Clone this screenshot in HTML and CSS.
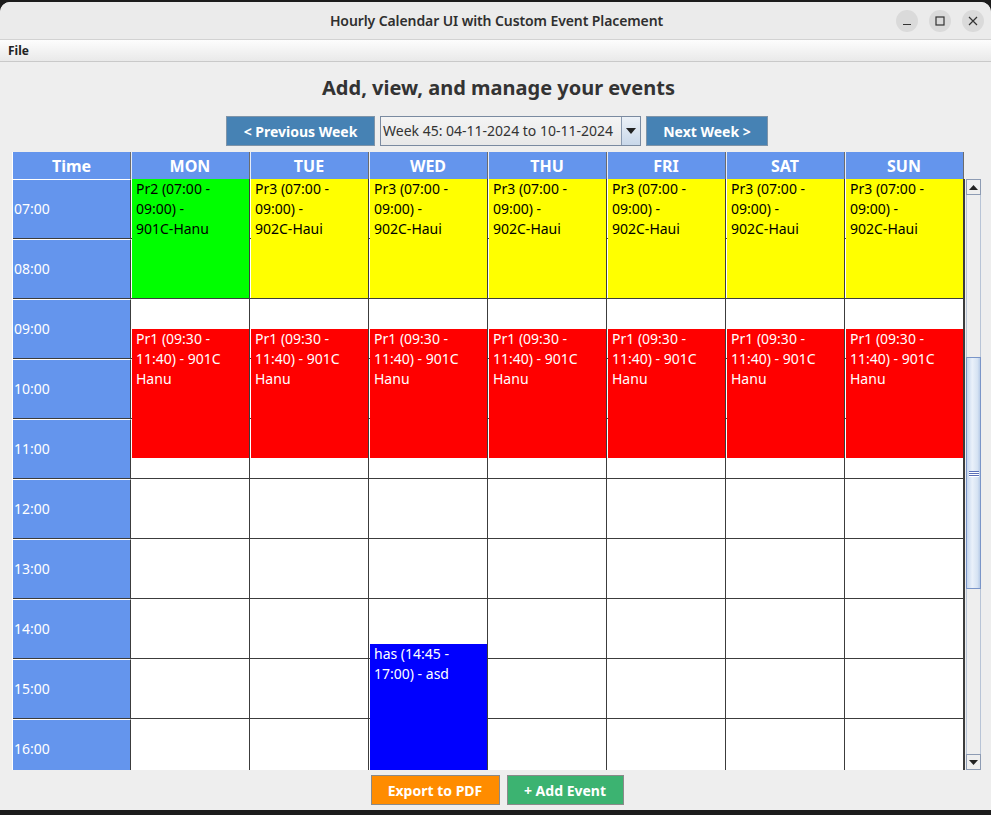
FILE: index.html
```html
<!DOCTYPE html>
<html lang="en">
<head>
<meta charset="utf-8">
<title>Hourly Calendar UI with Custom Event Placement</title>
<link rel="stylesheet" href="styles.css">
</head>
<body>
<div class="window">
  <header class="titlebar">
    <div></div>
    <div class="title">Hourly Calendar UI with Custom Event Placement</div>
    <div class="wbtns">
      <span class="wbtn"><svg width="10" height="10" viewBox="0 0 10 10"><path d="M1 8.5h8" stroke="#333" stroke-width="1.2"/></svg></span>
      <span class="wbtn"><svg width="10" height="10" viewBox="0 0 10 10"><rect x="1" y="1" width="8" height="8" fill="none" stroke="#333" stroke-width="1.2"/></svg></span>
      <span class="wbtn"><svg width="10" height="10" viewBox="0 0 10 10"><path d="M1 1l8 8M9 1l-8 8" stroke="#333" stroke-width="1.2"/></svg></span>
    </div>
  </header>
  <nav class="menubar"><span class="menu">File</span></nav>

  <main class="content">
    <h1 class="heading">Add, view, and manage your events</h1>
    <div class="navrow">
      <button class="navbtn prev">&lt; Previous Week</button>
      <div class="combo">
        <span class="combo-text">Week 45: 04-11-2024 to 10-11-2024</span>
        <span class="combo-arrow"><svg width="10" height="6" viewBox="0 0 10 6"><path d="M0 0h10L5 6z" fill="#222"/></svg></span>
      </div>
      <button class="navbtn next">Next Week &gt;</button>
    </div>

    <section class="calendar">
      <div class="head-row">
        <div class="hcell">Time</div>
        <div class="hcell">MON</div>
        <div class="hcell">TUE</div>
        <div class="hcell">WED</div>
        <div class="hcell">THU</div>
        <div class="hcell">FRI</div>
        <div class="hcell">SAT</div>
        <div class="hcell">SUN</div>
        <div class="hcorner"></div>
      </div>
      <div class="body-row">
        <div class="viewport">
          <div class="grid">
            <div class="tcell">07:00</div><div class="dcell"></div><div class="dcell"></div><div class="dcell"></div><div class="dcell"></div><div class="dcell"></div><div class="dcell"></div><div class="dcell"></div>
            <div class="tcell">08:00</div><div class="dcell"></div><div class="dcell"></div><div class="dcell"></div><div class="dcell"></div><div class="dcell"></div><div class="dcell"></div><div class="dcell"></div>
            <div class="tcell">09:00</div><div class="dcell"></div><div class="dcell"></div><div class="dcell"></div><div class="dcell"></div><div class="dcell"></div><div class="dcell"></div><div class="dcell"></div>
            <div class="tcell">10:00</div><div class="dcell"></div><div class="dcell"></div><div class="dcell"></div><div class="dcell"></div><div class="dcell"></div><div class="dcell"></div><div class="dcell"></div>
            <div class="tcell">11:00</div><div class="dcell"></div><div class="dcell"></div><div class="dcell"></div><div class="dcell"></div><div class="dcell"></div><div class="dcell"></div><div class="dcell"></div>
            <div class="tcell">12:00</div><div class="dcell"></div><div class="dcell"></div><div class="dcell"></div><div class="dcell"></div><div class="dcell"></div><div class="dcell"></div><div class="dcell"></div>
            <div class="tcell">13:00</div><div class="dcell"></div><div class="dcell"></div><div class="dcell"></div><div class="dcell"></div><div class="dcell"></div><div class="dcell"></div><div class="dcell"></div>
            <div class="tcell">14:00</div><div class="dcell"></div><div class="dcell"></div><div class="dcell"></div><div class="dcell"></div><div class="dcell"></div><div class="dcell"></div><div class="dcell"></div>
            <div class="tcell">15:00</div><div class="dcell"></div><div class="dcell"></div><div class="dcell"></div><div class="dcell"></div><div class="dcell"></div><div class="dcell"></div><div class="dcell"></div>
            <div class="tcell">16:00</div><div class="dcell"></div><div class="dcell"></div><div class="dcell"></div><div class="dcell"></div><div class="dcell"></div><div class="dcell"></div><div class="dcell"></div>
          </div>

          <div class="event green" style="left:119px;top:0px;height:119px">Pr2 (07:00 - 09:00) - <span class="nw">901C-Hanu</span></div>
          <div class="event yellow" style="left:238px;top:0px;height:119px">Pr3 (07:00 - 09:00) - <span class="nw">902C-Haui</span></div>
          <div class="event yellow" style="left:357px;top:0px;height:119px">Pr3 (07:00 - 09:00) - <span class="nw">902C-Haui</span></div>
          <div class="event yellow" style="left:476px;top:0px;height:119px">Pr3 (07:00 - 09:00) - <span class="nw">902C-Haui</span></div>
          <div class="event yellow" style="left:595px;top:0px;height:119px">Pr3 (07:00 - 09:00) - <span class="nw">902C-Haui</span></div>
          <div class="event yellow" style="left:714px;top:0px;height:119px">Pr3 (07:00 - 09:00) - <span class="nw">902C-Haui</span></div>
          <div class="event yellow" style="left:833px;top:0px;height:119px">Pr3 (07:00 - 09:00) - <span class="nw">902C-Haui</span></div>

          <div class="event red" style="left:119px;top:150px;height:129px">Pr1 (09:30 - 11:40) - 901C Hanu</div>
          <div class="event red" style="left:238px;top:150px;height:129px">Pr1 (09:30 - 11:40) - 901C Hanu</div>
          <div class="event red" style="left:357px;top:150px;height:129px">Pr1 (09:30 - 11:40) - 901C Hanu</div>
          <div class="event red" style="left:476px;top:150px;height:129px">Pr1 (09:30 - 11:40) - 901C Hanu</div>
          <div class="event red" style="left:595px;top:150px;height:129px">Pr1 (09:30 - 11:40) - 901C Hanu</div>
          <div class="event red" style="left:714px;top:150px;height:129px">Pr1 (09:30 - 11:40) - 901C Hanu</div>
          <div class="event red" style="left:833px;top:150px;height:129px">Pr1 (09:30 - 11:40) - 901C Hanu</div>

          <div class="event blue" style="left:357px;top:465px;height:135px">has (14:45 - 17:00) - asd</div>
        </div>
        <div class="scrollbar">
          <div class="sb-btn"><svg width="9" height="5" viewBox="0 0 9 5"><path d="M0 5h9L4.5 0z" fill="#222"/></svg></div>
          <div class="sb-track">
            <div class="sb-space"></div>
            <div class="sb-thumb"><span class="grip"></span><span class="grip"></span><span class="grip"></span></div>
          </div>
          <div class="sb-btn"><svg width="9" height="5" viewBox="0 0 9 5"><path d="M0 0h9L4.5 5z" fill="#222"/></svg></div>
        </div>
      </div>
    </section>

    <div class="actions">
      <button class="actbtn export">Export to PDF</button>
      <button class="actbtn add">+ Add Event</button>
    </div>
  </main>
</div>
</body>
</html>
```

FILE: styles.css
```css
* { box-sizing: border-box; }

html, body {
  margin: 0;
  padding: 0;
}

body {
  width: 991px;
  height: 815px;
  overflow: hidden;
  background: #1c1c1c;
  font-family: "Noto Sans", "DejaVu Sans", sans-serif;
}

.window {
  display: flex;
  flex-direction: column;
  background: #eeeeee;
  border-radius: 10px 10px 0 0;
  margin-top: 2px;
  height: 808px;
  overflow: hidden;
}

.titlebar {
  height: 38px;
  flex: none;
  display: grid;
  grid-template-columns: 1fr auto 1fr;
  align-items: center;
  background: #ebebeb;
  border-bottom: 1px solid #d2d2d2;
}

.title {
  font-size: 14px;
  font-weight: 600;
  color: #2f2f2f;
  letter-spacing: -0.1px;
  padding-left: 2px;
}

.wbtns {
  display: flex;
  justify-content: flex-end;
  gap: 11px;
  padding-right: 7px;
}

.wbtn {
  width: 22px;
  height: 22px;
  border-radius: 50%;
  background: #dadada;
  display: flex;
  align-items: center;
  justify-content: center;
}

.menubar {
  height: 22px;
  flex: none;
  background: linear-gradient(#fdfdfd, #e9e9e9);
  border-bottom: 1px solid #c9c9c9;
  display: flex;
  align-items: center;
  padding-left: 8px;
}

.menu {
  font-size: 12px;
  font-weight: 700;
  color: #222;
}

.content {
  flex: 1;
  display: flex;
  flex-direction: column;
  padding: 0 9px 0 12px;
}

.heading {
  margin: 13px 0 0;
  text-align: center;
  font-size: 20px;
  line-height: 26px;
  font-weight: 700;
  color: #333333;
  padding-left: 3px;
}

.navrow {
  margin-top: 15px;
  display: flex;
  justify-content: center;
  gap: 5px;
  height: 30px;
}

.navbtn {
  height: 30px;
  border: 1px solid #7f94a8;
  background: #4682b4;
  color: #ffffff;
  font-family: "Noto Sans", sans-serif;
  font-size: 14px;
  font-weight: 700;
  padding: 0;
}

.navbtn.prev { width: 149px; }
.navbtn.next { width: 122px; }

.combo {
  width: 261px;
  height: 30px;
  display: flex;
  border: 1px solid #7a8aa0;
  background: #eeeeee;
  box-shadow: inset 1px 1px 0 #ffffff;
}

.combo-text {
  flex: 1;
  font-size: 14px;
  color: #333333;
  line-height: 28px;
  padding-left: 2px;
  border-right: 1px solid #8a9ab0;
  background: linear-gradient(#f4f4f4, #e8e8e8);
}

.combo-arrow {
  width: 18px;
  display: flex;
  align-items: center;
  justify-content: center;
  background: linear-gradient(#ecf1f7, #c9d8ea);
}

.calendar {
  margin-top: 6px;
  display: flex;
  flex-direction: column;
  border-left: 1px solid #ffffff;
}

.head-row {
  display: grid;
  grid-template-columns: 118px repeat(7, 119px) 18px;
  height: 27px;
}

.hcell {
  background: #6495ed;
  color: #ffffff;
  font-size: 16px;
  font-weight: 700;
  display: flex;
  align-items: center;
  justify-content: center;
  border-right: 1px solid #6c6c6c;
  box-shadow: inset 1px 0 0 #e6ecf8;
  padding-top: 1px;
}

.hcell:first-child { box-shadow: none; }

.hcorner { background: #eeeeee; }

.body-row {
  display: flex;
  height: 591px;
}

.viewport {
  width: 951px;
  height: 591px;
  overflow: hidden;
  position: relative;
  background: #ffffff;
}

.grid {
  display: grid;
  grid-template-columns: 118px repeat(7, 119px);
  grid-auto-rows: 60px;
}

.tcell {
  background: #6495ed;
  color: #ffffff;
  font-size: 14px;
  display: flex;
  align-items: center;
  padding-left: 1px;
  padding-bottom: 1px;
  border-top: 1px solid #ffffff;
  border-bottom: 1px solid #3c3c3c;
  border-right: 1px solid #3c3c3c;
}

.dcell {
  background: #ffffff;
  border-bottom: 1px solid #3c3c3c;
  border-right: 1px solid #3c3c3c;
}

.event {
  position: absolute;
  width: 117px;
  padding: 0 4px;
  font-size: 14px;
  line-height: 20px;
  overflow: hidden;
}

.nw { white-space: nowrap; }

.event.green { background: #00ff00; color: #000000; }
.event.yellow { background: #ffff00; color: #000000; }
.event.red { background: #ff0000; color: #ffffff; }
.event.blue { background: #0000ff; color: #ffffff; }

.scrollbar {
  width: 18px;
  display: flex;
  flex-direction: column;
  background: #eeeeee;
  border-left: 1px solid #3c3c3c;
}

.sb-btn {
  height: 16px;
  flex: none;
  margin: 0 1px 0 1px;
  background: #eeeeee;
  border: 1px solid #8d9bb3;
  display: flex;
  align-items: center;
  justify-content: center;
}

.sb-track {
  flex: 1;
  display: flex;
  flex-direction: column;
  margin: 0 1px;
  border-left: 1px solid #b8c4d6;
  border-right: 1px solid #b8c4d6;
}

.sb-space {
  height: 162px;
  flex: none;
}

.sb-thumb {
  height: 232px;
  margin: 0 -1px;
  border: 1px solid #7a95c8;
  background: linear-gradient(90deg, #c5d6ee, #eaf1fa 40%, #d6e3f3 80%, #b8cce8);
  display: flex;
  flex-direction: column;
  align-items: center;
  justify-content: center;
  gap: 1px;
}

.grip {
  width: 10px;
  height: 1px;
  background: #5a6fb8;
  box-shadow: 0 1px 0 #ffffff;
}

.actions {
  display: flex;
  justify-content: center;
  gap: 7px;
  padding-top: 5px;
}

.actbtn {
  height: 30px;
  border: 1px solid #8a8a8a;
  color: #ffffff;
  font-family: "Noto Sans", sans-serif;
  font-size: 14px;
  font-weight: 700;
  padding: 0;
}

.actbtn.export { width: 129px; background: #ff8c00; }
.actbtn.add { width: 117px; background: #3cb371; }
```
